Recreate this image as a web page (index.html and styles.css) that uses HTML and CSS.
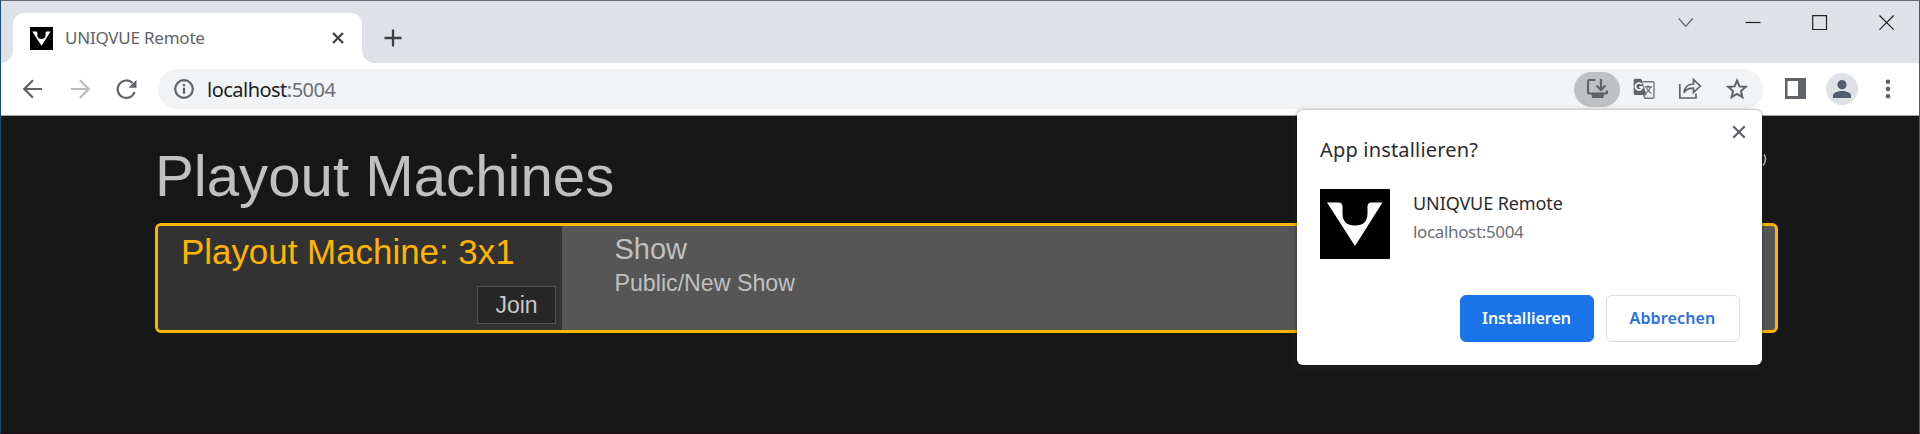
FILE: index.html
```
<!DOCTYPE html>
<html lang="de">
<head>
<meta charset="utf-8">
<title>UNIQVUE Remote</title>
<link rel="stylesheet" href="styles.css">
</head>
<body>
<div class="window">
  <header class="tabstrip">
    <div class="tab">
      <svg class="favicon" viewBox="0 0 70 70"><rect width="70" height="70"/><path fill="#fff" d="M7 13.500H19Q22 13.500 22.500 17V25Q23 36.500 35 36.500T47.500 25V17Q48 13.500 51 13.500H62.500L35 57Z"/></svg>
      <span class="tab-title">UNIQVUE Remote</span>
      <svg class="tab-close" viewBox="0 0 12 12"><path d="M1 1 11 11M11 1 1 11"/></svg>
    </div>
    <svg class="new-tab" viewBox="0 0 18 18"><path d="M9 .5V17.500M.5 9H17.500"/></svg>
    <div class="controls">
      <svg class="chevron" width="16" height="16" viewBox="0 0 16 16"><path d="M.8 3.500 7.700 11.300 14.700 3.500"/></svg>
      <svg width="16" height="16" viewBox="0 0 16 16"><path d="M.5 7.500H15.500"/></svg>
      <svg width="16" height="16" viewBox="0 0 16 16"><path d="M.7 .7H14.500V14.500H.7Z"/></svg>
      <svg width="16" height="16" viewBox="0 0 16 16"><path d="M.5 .5 14.700 14.700M14.700 .5 .5 14.700"/></svg>
    </div>
  </header>
  <nav class="toolbar">
    <div class="nav-icons">
      <svg class="stroke" width="20" height="20" viewBox="0 0 20 20"><path d="M19 10H2M10 1.300 1.400 10 10 18.700"/></svg>
      <svg class="stroke faded" width="20" height="20" viewBox="0 0 20 20"><path d="M1 10H18M10 1.300 18.600 10 10 18.700"/></svg>
      <svg class="stroke reload" width="22" height="20" viewBox="0 0 22 20"><path d="M18.600 13A8.700 8.700 0 1 1 16.500 4"/><path class="solid" d="M20.500 .7V8.800H12.400Z"/></svg>
    </div>
    <div class="omnibox">
      <svg class="stroke" width="20" height="20" viewBox="0 0 20 20"><circle cx="10" cy="10" r="8.800"/><path d="M10 8.700V14.800M10 5V7.200"/></svg>
      <span class="url">localhost<span class="port">:5004</span></span>
      <div class="actions">
        <span class="install-pill">
          <svg class="stroke" width="22" height="22" viewBox="0 0 22 22"><path d="M9.500 2H3.500Q2 2 2 3.500V14Q2 15.500 3.500 15.500H19.500Q21 15.500 21 14V12.500M15 1V11M10.500 7.500 15 12 19.500 7.500"/><path class="solid" d="M5.500 15.500H18V18L17 20H6.500L5.500 18Z"/></svg>
        </span>
        <svg class="translate" width="22" height="22" viewBox="0 0 22 22"><path fill="#5f6368" d="M2.500 .8H8.300L13.500 17H2.500Q.7 17 .7 15.200V2.500Q.7 .8 2.500 .8Z"/><path fill="none" stroke="#74777b" stroke-width="1.400" d="M9.500 3.700H19.500Q21 3.700 21 5.200V18.800Q21 20.300 19.500 20.300H12L10.500 17L13.500 16.500"/><path fill="none" stroke="#74777b" stroke-width="1.300" d="M11.500 9H19M15 7V9M17.500 9Q16 13.500 12.500 15.500M13.500 10Q15 13.500 18.500 15.500"/><path fill="none" stroke="#fff" stroke-width="1.700" d="M8.700 6.300A3.500 3.500 0 1 0 9.400 9.200H6.300"/></svg>
        <svg class="share" width="24" height="22" viewBox="0 0 24 22"><path d="M1.800 6V20H18V15.500M6 14.800Q7 6.200 15.500 6V1.500L22.200 8L15.500 14.500V10.200Q9 10 6 14.800Z"/></svg>
        <svg class="star" width="22" height="22" viewBox="0 0 22 22"><path d="M11 2.500 13.400 8.400 19.700 8.900 14.900 13 16.400 19.200 11 15.900 5.600 19.200 7.100 13 2.300 8.900 8.600 8.400Z"/></svg>
      </div>
    </div>
    <svg class="side-panel" width="21" height="21" viewBox="0 0 21 21"><path fill="#5f6368" fill-rule="evenodd" d="M0 0H21V21H0ZM2.500 3V18H13V3Z"/></svg>
    <svg class="avatar" width="32" height="32" viewBox="0 0 32 32"><circle cx="16" cy="16" r="16" fill="#dee1e6"/><circle cx="16" cy="11.700" r="4.600" fill="#525c70"/><path fill="#525c70" d="M7 25V22.500C7 19.500 12 18 16 18S25 19.500 25 22.500V25Z"/></svg>
    <svg class="menu" width="6" height="20" viewBox="0 0 6 20"><circle cx="3" cy="2.700" r="2.300"/><circle cx="3" cy="10" r="2.300"/><circle cx="3" cy="17.300" r="2.300"/></svg>
  </nav>
  <main class="page">
    <div class="page-head">
      <h1>Playout Machines</h1>
      <svg class="spinner" width="14" height="14" viewBox="0 0 14 14"><path d="M11 1.500Q14.500 6.500 10 12.500"/></svg>
    </div>
    <section class="machine">
      <div class="machine-main">
        <h2>Playout Machine: 3x1</h2>
        <button class="join">Join</button>
      </div>
      <div class="machine-show">
        <h3>Show</h3>
        <p>Public/New Show</p>
      </div>
    </section>
  </main>
  <aside class="dialog">
    <svg class="dialog-close" viewBox="0 0 14 14"><path d="M1.200 1.200 12.800 12.800M12.800 1.200 1.200 12.800"/></svg>
    <h4>App installieren?</h4>
    <div class="app">
      <svg class="app-icon" viewBox="0 0 70 70"><rect width="70" height="70"/><path fill="#fff" d="M7 13.500H19Q22 13.500 22.500 17V25Q23 36.500 35 36.500T47.500 25V17Q48 13.500 51 13.500H62.500L35 57Z"/></svg>
      <div class="app-text">
        <div class="app-name"><span>UNIQVUE Remote</span></div>
        <div class="app-host"><span>localhost:5004</span></div>
      </div>
    </div>
    <div class="buttons">
      <button class="btn primary">Installieren</button>
      <button class="btn">Abbrechen</button>
    </div>
  </aside>
</div>
</body>
</html>
```
FILE: styles.css
```
* { box-sizing: border-box; }
html { height: 434px; overflow: hidden; }
body { margin: 0; height: 434px; background: #171717; font-family: "Noto Sans", "Open Sans", sans-serif; overflow: hidden; }
h1, h2, h3, h4, p { margin: 0; font-weight: 400; white-space: nowrap; }
button { padding: 0; font-family: inherit; }
svg { display: block; flex: none; }
.window { position: relative; width: 1920px; height: 434px; border: 1px solid #686b6f; border-left-color: #145073; border-right-color: #55585b; border-bottom-color: #1d1216; background: #171717; }

.tabstrip { display: flex; height: 62px; padding-left: 12px; background: #dee1e6; }
.tab { position: relative; display: flex; align-items: center; width: 349px; height: 50px; margin-top: 12px; padding: 0 18px 0 17px; background: #fff; border-radius: 11px 11px 0 0; }
.tab::before, .tab::after { content: ""; position: absolute; bottom: 0; width: 12px; height: 12px; }
.tab::before { left: -12px; background: radial-gradient(circle at 0 0, transparent 11.5px, #fff 12px); }
.tab::after { right: -12px; background: radial-gradient(circle at 100% 0, transparent 11.5px, #fff 12px); }
.favicon { width: 23px; height: 23px; }
.tab-title { margin: -2px 0 0 12px; font-size: 17px; letter-spacing: -.22px; color: #606368; white-space: nowrap; }
.tab-close { width: 12px; height: 12px; margin-left: auto; stroke: #3c4043; stroke-width: 2.2; }
.new-tab { width: 18px; height: 18px; margin: 28px 0 0 22px; stroke: #3c4043; stroke-width: 2.3; }
.controls { display: flex; gap: 51px; margin: 14px 24px 0 auto; }
.controls svg { fill: none; stroke: #222; stroke-width: 1.2; }
.controls .chevron { stroke: #5f6368; }

.toolbar { display: flex; align-items: center; height: 53px; padding: 0 28px 1px 22px; background: #fff; border-bottom: 1px solid #a8a8a8; }
.nav-icons { display: flex; gap: 27px; width: 135px; }
.stroke { fill: none; stroke: #5f6368; stroke-width: 2.2; }
.stroke .solid { fill: #5f6368; stroke: none; }
.faded { stroke: #babcbe; }
.reload { margin-left: -1px; }
.omnibox { display: flex; align-items: center; width: 1605px; height: 40px; margin-top: 1px; padding: 0 15px 0 16px; border-radius: 20px; background: #f1f3f4; }
.url { margin-left: 13px; font-size: 20px; letter-spacing: -.52px; color: #202124; }
.port { color: #6b6f74; }
.actions { display: flex; align-items: center; margin-left: auto; }
.install-pill { display: flex; align-items: center; justify-content: center; width: 46px; height: 35px; border-radius: 18px; background: #bfc0c1; }
.translate { margin-left: 13px; }
.share { margin-left: 23px; fill: none; stroke: #5f6368; stroke-width: 1.7; }
.star { margin-left: 24px; fill: none; stroke: #5f6368; stroke-width: 2; }
.side-panel { margin-left: 22px; }
.avatar { margin-left: 20px; }
.menu { margin-left: 27px; fill: #5f6368; }

.page { width: 1624px; margin: 0 0 0 154px; font-family: "Liberation Sans", Arial, sans-serif; color: #c0c0c0; }
.page-head { display: flex; justify-content: space-between; height: 107px; padding-top: 27px; }
h1 { font-size: 58.2px; line-height: 66px; }
.spinner { margin: 10px 12px 0 0; fill: none; stroke: #b9c4d0; stroke-width: 1.5; }
.machine { display: flex; width: 1623px; height: 110px; border: 3px solid #ffb400; border-radius: 6px; background: #565656; overflow: hidden; }
.machine-main { display: flex; flex-direction: column; width: 404px; padding: 6px 6px 6px 23px; background: #323232; }
h2 { font-size: 34.9px; line-height: 40px; color: #ffb400; }
.join { align-self: flex-end; width: 79px; height: 38px; margin-top: auto; margin-bottom: 0; border: 1px solid #505050; background: #272727; color: #c8c8c8; font-size: 23px; }
.machine-show { padding: 6px 0 0 52.5px; }
h3 { font-size: 29px; line-height: 34px; }
p { font-size: 23.2px; line-height: 35px; }

.dialog { position: absolute; left: 1295.5px; top: 109px; width: 465px; height: 255px; padding: 25px 22px 0 23.5px; border-radius: 6px; background: #fff; box-shadow: 0 0 3px rgba(0,0,0,.45), 0 4px 10px rgba(60,64,67,.25); }
.dialog-close { position: absolute; right: 16px; top: 15px; width: 14px; height: 14px; stroke: #5f6368; stroke-width: 2.3; }
h4 { font-size: 20px; line-height: 30px; letter-spacing: .18px; color: #2a2b2e; }
.app { display: flex; gap: 23px; margin-top: 24px; }
.app-icon { width: 70px; height: 70px; }
.app-text { line-height: 27px; white-space: nowrap; }
.app-name { padding-top: 1px; font-size: 18px; letter-spacing: -.1px; color: #2a2b2e; }
.app-host { padding-top: 1px; font-size: 17px; letter-spacing: -.35px; color: #6b6f74; }
.buttons { display: flex; justify-content: flex-end; gap: 12px; margin-top: 36px; }
.btn { width: 134px; height: 47px; padding-bottom: 2px; border: 1px solid #dadce0; border-radius: 6px; background: #fff; color: #2a6fe0; font-size: 16px; font-weight: 600; }
.btn:last-child { letter-spacing: .15px; }
.primary { border-color: #1a73e8; background: #1a73e8; color: #fff; }
```
